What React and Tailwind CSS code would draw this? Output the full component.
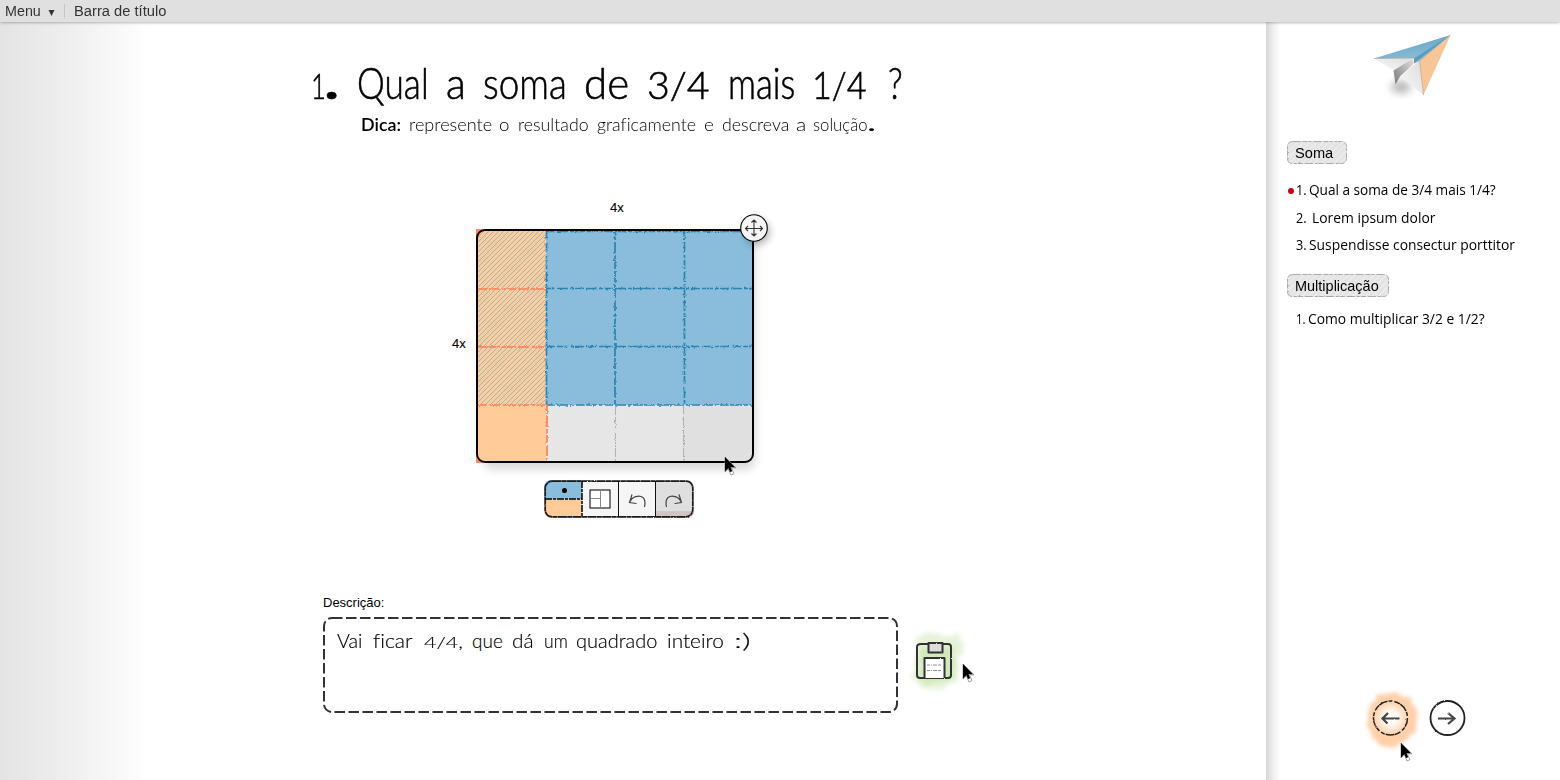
import { useLayoutEffect, useRef } from "react";

/* Text squeezed or stretched horizontally to a known width. */
function Fit({ text, width, className = "" }) {
  const ref = useRef(null);
  useLayoutEffect(() => {
    const el = ref.current;
    const fit = () => {
      const natural = el.offsetWidth;
      if (natural) el.style.transform = `scaleX(${width / natural})`;
    };
    fit();
    document.fonts?.ready.then(fit);
  }, [text, width]);
  return (
    <span className={`flex shrink-0 ${className}`} style={{ width }}>
      <span ref={ref} className="inline-block origin-left whitespace-pre [font-variant-ligatures:none]">
        {text}
      </span>
    </span>
  );
}

/* Words given as [text, start, end, extra classes] along one line. */
function Line({ words, className }) {
  return (
    <p className={`flex items-baseline ${className}`}>
      {words.map(([text, start, end, extra], i) => (
        <span
          key={i}
          className="flex"
          style={{ marginLeft: i ? start - words[i - 1][2] : 0 }}
        >
          <Fit text={text} width={end - start} className={extra} />
        </span>
      ))}
    </p>
  );
}

const TITLE = [
  ["1", 311, 326, "text-[36px]"],
  [".", 325, 338, "font-black"],
  ["Qual", 357, 429],
  ["a", 446, 466],
  ["soma", 483, 567],
  ["de", 584, 629],
  ["3/4", 647, 710, "text-[38px]"],
  ["mais", 728, 795],
  ["1/4", 812, 867, "text-[38px]"],
  ["?", 888, 903],
];

const HINT = [
  ["Dica:", 361, 401, "font-semibold"],
  ["represente", 409, 492],
  ["o", 499, 510],
  ["resultado", 518, 589],
  ["graficamente", 597, 696],
  ["e", 704, 714],
  ["descreva", 722, 789],
  ["a", 796, 806],
  ["solução", 813, 868],
  [".", 868, 875, "font-black"],
];

const ANSWER = [
  ["Vai", 337, 363],
  ["ficar", 373, 413],
  ["4/4,", 424, 463, "text-[16px]"],
  ["que", 472, 503],
  ["dá", 512, 534],
  ["um", 544, 568],
  ["quadrado", 576, 657],
  ["inteiro", 667, 724],
  [":)", 734, 750],
];

function Pointer({ className }) {
  return (
    <svg viewBox="0 0 13 20" className={`absolute h-[20px] w-[13px] overflow-visible ${className}`}>
      <path
        d="M1 1V16L4.3 12.8 7 19 10 17.6 7.3 11.8H12Z"
        fill="#fff"
        stroke="#888"
        strokeWidth="0.8"
      />
      <path d="M1 1V15.500L4.300 12.300 6 16 8.200 15.200 6.600 11.200H11Z" fill="#000" />
    </svg>
  );
}

function Defs() {
  return (
    <svg className="absolute h-0 w-0">
      <defs>
        <filter id="rough" x="-10%" y="-10%" width="120%" height="120%">
          <feTurbulence type="fractalNoise" baseFrequency="0.35" numOctaves="2" seed="4" />
          <feDisplacementMap in="SourceGraphic" scale="1.8" xChannelSelector="R" yChannelSelector="G" />
        </filter>
        {/* User-space region, because a straight line has an empty bounding box. */}
        <filter id="chalk" filterUnits="userSpaceOnUse" x="-5" y="-5" width="290" height="245">
          <feTurbulence type="fractalNoise" baseFrequency="0.4" numOctaves="2" seed="6" />
          <feDisplacementMap in="SourceGraphic" scale="3.2" xChannelSelector="R" yChannelSelector="G" />
        </filter>
        <filter id="paint" x="-30%" y="-30%" width="160%" height="160%">
          <feTurbulence type="fractalNoise" baseFrequency="0.09" numOctaves="3" seed="8" result="n" />
          <feDisplacementMap in="SourceGraphic" in2="n" scale="10" xChannelSelector="R" yChannelSelector="G" />
          <feGaussianBlur stdDeviation="2" />
        </filter>
        <filter id="soft" x="-50%" y="-50%" width="200%" height="200%">
          <feGaussianBlur stdDeviation="4" />
        </filter>
        <pattern id="hatch" width="5" height="5" patternUnits="userSpaceOnUse">
          <path d="M-1 6L6 -1M-1 1L1 -1M4 6L6 4" stroke="#7db7d2" strokeWidth="0.85" />
        </pattern>
      </defs>
    </svg>
  );
}

function FractionGrid() {
  return (
    <svg viewBox="0 0 278 234" className="h-[234px] w-[278px] overflow-visible">
      <rect x="6" y="4" width="274" height="237" rx="12" fill="#000" opacity="0.14" filter="url(#soft)" />
      <path d="M0 8V0H8M0 226V234H8" fill="#ff8a65" />
      <clipPath id="board">
        <rect x="1" y="1" width="276" height="232" rx="8" />
      </clipPath>
      <g clipPath="url(#board)">
        <rect width="278" height="234" fill="#8abddc" />
        <rect width="70" height="234" fill="#ffcb99" />
        <rect width="70" height="176" fill="url(#hatch)" />
        <rect x="70" y="176" width="138" height="58" fill="#e6e6e6" />
        <rect x="207" y="176" width="71" height="58" fill="#e0e0e0" />
        <g fill="none" strokeWidth="1.7" strokeDasharray="9 2 11 2 4 1">
          <path d="M70 59.500H277M70 117.500H277M70 176H277M70 2.500H277M70.500 2V176M139 2V176M208.500 2V176" stroke="#2b83b0" filter="url(#chalk)" />
          <path d="M2 60H70M2 118H70M2 176H70M71 176V233" stroke="#ff7f52" filter="url(#chalk)" />
          <path d="M139.500 177V233M207.500 177V233" stroke="#b3b3b3" strokeWidth="1.1" filter="url(#chalk)" />
        </g>
      </g>
      <rect x="1" y="1" width="276" height="232" rx="8" fill="none" stroke="#000" strokeWidth="2" />
    </svg>
  );
}

function MoveHandle() {
  return (
    <svg viewBox="0 0 30 30" className="absolute top-[-16px] left-[263px] h-[30px] w-[30px] overflow-visible">
      <circle cx="18" cy="19" r="12" fill="#000" opacity="0.35" filter="url(#soft)" />
      <circle cx="15" cy="15" r="13.300" fill="#f5f5f5" stroke="#000" strokeWidth="1.100" />
      <path
        d="M15 7V23M6.500 15.500H23.500M12.500 9.500L15 7 17.500 9.500M12.500 20.500L15 23 17.500 20.500M9 13L6.500 15.500 9 18M21 13L23.500 15.500 21 18"
        fill="none"
        stroke="#333"
        strokeWidth="1.100"
      />
    </svg>
  );
}

function Toolbar() {
  return (
    <div className="relative flex h-[38px] w-[150px] overflow-hidden rounded-[7px]">
      <div className="flex w-[38px] flex-col">
        <div className="flex h-[19px] items-center justify-center bg-[#8abddc]">
          <span className="mt-px ml-[2px] h-[5px] w-[5px] rounded-full bg-black" />
        </div>
        <div className="grow bg-[#ffcb99]" />
      </div>
      <div className="flex w-[36px] items-center justify-center bg-[#f5f5f5]">
        <svg viewBox="0 0 22 20" className="h-[20px] w-[22px]">
          <rect x="1" y="1" width="20" height="18" fill="#fff" stroke="#111" strokeWidth="1.100" />
          <path d="M11.500 1V19M1 9.500H11.500" stroke="#888" fill="none" />
        </svg>
      </div>
      <div className="flex w-[37px] items-center justify-center bg-[#f5f5f5] pt-[2px]">
        <svg viewBox="0 0 20 18" className="h-[18px] w-[20px]" fill="none" stroke="#444" strokeWidth="1.200">
          <path d="M5 3.500L2.500 11.500 9.500 12.500M2.500 11.500C5 5.500 12 3.500 16 6.500C18.300 8.500 18.300 12 17.500 16" />
        </svg>
      </div>
      <div className="flex grow items-center justify-center border-b-[7px] border-[#d0c7c4] bg-[#dfdfdf] pt-[9px] pr-[2px]">
        <svg viewBox="0 0 20 18" className="h-[18px] w-[20px]" fill="none" stroke="#444" strokeWidth="1.200">
          <path d="M15 3.500L17.500 11.500 10.500 12.500M17.500 11.500C15 5.500 8 3.500 4 6.500C1.700 8.500 1.700 12 2.500 16" />
        </svg>
      </div>
      <svg viewBox="0 0 150 38" className="absolute inset-0 h-[38px] w-[150px]">
        <rect x="1.200" y="1.200" width="147.600" height="35.600" rx="7" fill="none" stroke="#1a1a1a" strokeWidth="1.700" strokeDasharray="9 .4 5 .4" filter="url(#rough)" />
        <path d="M38 1V37M1 19H38" stroke="#000" strokeWidth="1.500" strokeDasharray="7 1 3 1" />
        <path d="M74.500 1V37M111.500 1V37" stroke="#111" strokeWidth="1" />
      </svg>
    </div>
  );
}

function SaveIcon() {
  return (
    <svg viewBox="0 0 60 64" className="h-[64px] w-[60px] overflow-visible">
      <g filter="url(#paint)">
        <path d="M6 10L22 4 34 7 50 5 54 25 48 33 47 51 34 60 10 59 3 50 6 30Z" fill="#cfe8b8" opacity="0.5" />
        <path d="M10 18H45V46L38 54H12L8 46Z" fill="#b8e193" opacity="0.45" />
      </g>
      <g stroke="#333" strokeWidth="2" strokeLinejoin="round" filter="url(#rough)">
        <path d="M11 15H38Q41 15 41 18V46Q41 49 38 49H10Q7 49 7 46V18Q7 15 11 15Z" fill="none" />
        <rect x="18.500" y="14" width="14" height="9.500" fill="#ddd" />
        <path d="M14.500 49V29H34.500V49" fill="#fff" />
      </g>
      <path d="M17 36H32M17 41.500H32" stroke="#777" strokeWidth="0.800" strokeDasharray="3 1 1 1 4 1" />
    </svg>
  );
}

function PaperPlane() {
  return (
    <svg viewBox="0 0 80 72" className="h-[72px] w-[80px] overflow-visible">
      <defs>
        <linearGradient id="wing" x1="0" y1="0" x2="0.4" y2="1">
          <stop offset="0" stopColor="#5b9cbd" />
          <stop offset="1" stopColor="#8fc0d8" />
        </linearGradient>
        <linearGradient id="fold" x1="1" y1="0" x2="0" y2="1">
          <stop offset="0" stopColor="#e2e2e2" />
          <stop offset="1" stopColor="#777" />
        </linearGradient>
        <linearGradient id="paper" x1="1" y1="0" x2="0" y2="1">
          <stop offset="0" stopColor="#dcdcdc" />
          <stop offset="1" stopColor="#fafafa" />
        </linearGradient>
      </defs>
      <ellipse cx="26" cy="54" rx="10" ry="6" fill="#000" opacity="0.3" filter="url(#soft)" />
      <path d="M-1 25.500L39 24.500 19 37.500Z" fill="url(#paper)" />
      <path d="M18.500 37.500L38.500 25V31L25 43.500 20.500 51.500Z" fill="url(#fold)" />
      <path d="M25 43.500L44.500 27.500 48.500 62Z" fill="url(#paper)" />
      <path d="M-1 25.500L75.500 2 44.500 28 39 30.500V25Z" fill="url(#wing)" />
      <path d="M39 30.500L75.500 2 39 25.500Z" fill="#5b9bbc" />
      <path d="M75.500 2L44.500 28 48.500 62Z" fill="#f7c596" />
      <path d="M75.500 2L44.500 28 48.500 62M-1 25.500L39 25" fill="none" stroke="#b0a191" strokeWidth="0.600" />
    </svg>
  );
}

function Tag({ children, className, width }) {
  return (
    <div
      className={`relative flex h-[23px] items-center rounded-[5px] bg-[repeating-linear-gradient(135deg,#e4e4e4_0px,#e4e4e4_3px,#ebebeb_3px,#ebebeb_4.500px)] pl-[8px] text-[15px] leading-none ${className}`}
    >
      <svg className="absolute inset-0 h-full w-full">
        <rect x="0.5" y="0.5" width={width - 1} height="22" rx="5" fill="none" stroke="#aaa" strokeDasharray="8 2 5 1 3 2" filter="url(#rough)" />
      </svg>
      {children}
    </div>
  );
}

function Item({ words, className }) {
  return (
    <Line
      words={words}
      className={`h-[20px] font-['Open_Sans',sans-serif] text-[15px] leading-[20px] ${className}`}
    />
  );
}

function NavButtons() {
  return (
    <div className="relative ml-[98px] flex h-[60px] w-[104px]">
      <svg viewBox="0 0 104 60" className="h-[60px] w-[104px] overflow-visible">
        <path d="M14 7L30 2 46 8 55 26 50 42 40 53 28 58 12 52 4 38 5 18Z" fill="#ffbf8a" opacity="0.75" filter="url(#paint)" />
        <circle cx="27" cy="28" r="12" fill="#fff" filter="url(#soft)" />
        <g fill="none" stroke="#222" strokeWidth="1.800" filter="url(#rough)">
          <circle cx="26.500" cy="28" r="17" strokeWidth="1.500" strokeDasharray="9 1 4 2 6 .5" />
          <circle cx="83.500" cy="28" r="17" />
          <path d="M19 28.500L35.500 28.500M24 23L18.500 28.500 23.500 33.500" stroke="#444" strokeWidth="2.200" />
          <path d="M74 28.500H90M84 23L90.500 28.500 84 34" stroke="#444" strokeWidth="2.200" />
        </g>
      </svg>
      <Pointer className="top-[52px] left-[36px]" />
    </div>
  );
}

export default function App() {
  return (
    <div className="flex h-[780px] w-[1560px] flex-col overflow-hidden bg-white font-['Liberation_Sans',Arial,sans-serif] text-black">
      <Defs />
      <header className="relative z-10 flex h-[22px] shrink-0 items-center rounded-b-[2px] bg-[#e0e0e0] pl-[5px] text-[15.5px] leading-none text-[#333] shadow-[0_1px_3px_rgba(0,0,0,0.28)]">
        <Fit text="Menu" width={36} />
        <svg viewBox="0 0 7 6" className="mt-[3px] ml-[7px] h-[6px] w-[7px]">
          <path d="M0.500 0H6.500L3.500 6Z" fill="#333" />
        </svg>
        <span className="ml-[9px] h-[14px] w-px bg-[#c6c6c6]" />
        <Fit text="Barra de título" width={92} className="ml-[9px]" />
      </header>

      <div className="flex grow">
        <main className="flex w-[1266px] shrink-0 flex-col bg-[linear-gradient(90deg,#e4e4e4_0px,#f0f0f0_75px,#fff_148px)]">
          <Line
            words={TITLE}
            className="mt-[39px] ml-[311px] h-[43px] font-['Lato',sans-serif] text-[43px] leading-[43px] font-light [-webkit-text-stroke:0.6px_#000]"
          />
          <Line
            words={HINT}
            className="mt-[12px] ml-[361px] h-[17px] font-['Lato',sans-serif] text-[17px] leading-[17px] font-light"
          />

          <section className="mt-[68px] ml-[452px] flex w-[303px] flex-col">
            <span className="ml-[158px] h-[14px] text-[13px] leading-[14px] [-webkit-text-stroke:0.1px_#000]">4x</span>
            <div className="mt-[14px] flex h-[234px] items-center">
              <span className="w-[24px] shrink-0 pb-[6px] text-[13px] leading-none [-webkit-text-stroke:0.1px_#000]">4x</span>
              <div className="relative h-[234px] w-[278px]">
                <FractionGrid />
                <MoveHandle />
                <Pointer className="top-[227px] left-[248px]" />
              </div>
            </div>
            <div className="mt-[17px] ml-[92px]">
              <Toolbar />
            </div>
          </section>

          <section className="mt-[77px] ml-[323px]">
            <h2 className="flex h-[15px] text-[13px] leading-[15px]">
              <Fit text="Descrição:" width={61} />
            </h2>
            <div className="mt-[7px] flex">
              <div className="relative h-[96px] w-[575px] pt-[14px] pl-[14px]">
                <svg viewBox="0 0 575 96" className="absolute inset-0 h-[96px] w-[575px]">
                  <rect x="1" y="1" width="573" height="94" rx="8" fill="none" stroke="#333" strokeWidth="2" strokeDasharray="10.500 3.500" />
                </svg>
                <Line
                  words={ANSWER}
                  className="h-[19px] font-['Lato',sans-serif] text-[19px] leading-[19px] font-light [-webkit-text-stroke:0.15px_#000]"
                />
              </div>
              <div className="relative mt-[12px] ml-[12px]">
                <SaveIcon />
                <Pointer className="top-[34px] left-[52px]" />
              </div>
            </div>
          </section>
        </main>

        <aside className="flex grow flex-col bg-[linear-gradient(90deg,#d6d6d6_0px,#efefef_7px,#fff_15px)]">
          <div className="mt-[11px] ml-[109px] h-[72px]">
            <PaperPlane />
          </div>
          <Tag className="mt-[36px] ml-[21px] w-[60px]" width={60}>
            <Fit text="Soma" width={38} />
          </Tag>
          <div className="mt-[15px] ml-[22px] flex items-center">
            <span className="mt-[3px] h-[6px] w-[6px] rounded-full bg-[#c8000f]" />
            <Item className="ml-[2px]" words={[["1.", 1296, 1307], ["Qual a soma de 3/4 mais 1/4?", 1309, 1496]]} />
          </div>
          <Item className="mt-[8px] ml-[30px]" words={[["2.", 1296, 1307], ["Lorem ipsum dolor", 1312, 1435]]} />
          <Item className="mt-[7px] ml-[30px]" words={[["3.", 1296, 1307], ["Suspendisse consectur porttitor", 1309, 1515]]} />
          <Tag className="mt-[20px] ml-[21px] w-[102px]" width={102}>
            <Fit text="Multiplicação" width={84} />
          </Tag>
          <Item className="mt-[11px] ml-[30px]" words={[["1.", 1296, 1306], ["Como multiplicar 3/2 e 1/2?", 1308, 1485]]} />
          <div className="mt-[362px]">
            <NavButtons />
          </div>
        </aside>
      </div>
    </div>
  );
}
